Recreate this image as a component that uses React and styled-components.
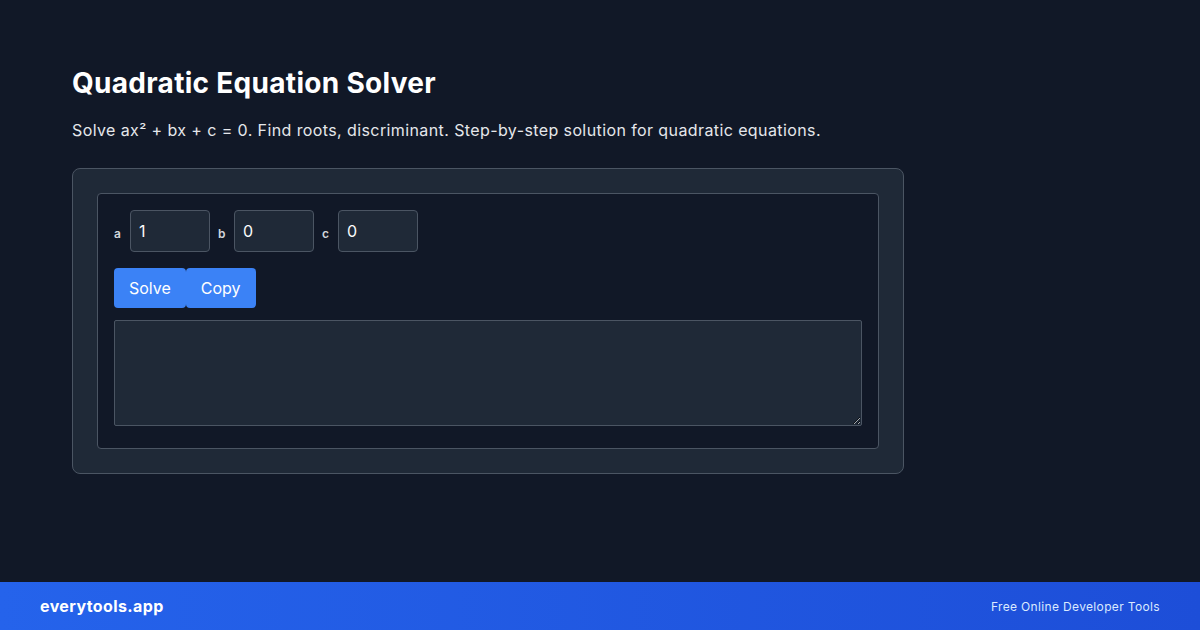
import React, { useState } from "react";
import styled, { createGlobalStyle } from "styled-components";

const GlobalStyle = createGlobalStyle`
	html, body {
		margin: 0;
		padding: 0;
		background: #111827;
	}
	body {
		font-family: Inter, "Noto Sans", "Liberation Sans", sans-serif;
		color: #f9fafb;
	}
	* {
		box-sizing: border-box;
	}
`;

const App = () => {
	const [a, setA] = useState("1");
	const [b, setB] = useState("0");
	const [c, setC] = useState("0");

	return (
		<Page>
			<GlobalStyle />
			<Main>
				<Title>Quadratic Equation Solver</Title>
				<Description>
					Solve ax² + bx + c = 0. Find roots, discriminant. Step-by-step
					solution for quadratic equations.
				</Description>

				<Card>
					<Panel>
						<Inputs>
							<Label>a</Label>
							<Input value={a} onChange={(e) => setA(e.target.value)} />
							<Label>b</Label>
							<Input value={b} onChange={(e) => setB(e.target.value)} />
							<Label>c</Label>
							<Input value={c} onChange={(e) => setC(e.target.value)} />
						</Inputs>
						<Row>
							<Button>Solve</Button>
							<Button>Copy</Button>
						</Row>
						<Output readOnly />
					</Panel>
				</Card>
			</Main>

			<Footer>
				<Brand>everytools.app</Brand>
				<Tagline>Free Online Developer Tools</Tagline>
			</Footer>
		</Page>
	);
};

export default App;

const Page = styled.div`
	min-height: 100vh;
	display: flex;
	flex-direction: column;
`;

const Main = styled.main`
	flex: 1;
	padding: 65px 72px 0;
`;

const Title = styled.h1`
	margin: 0;
	font-size: 28px;
	line-height: 36px;
	font-weight: 700;
	letter-spacing: 0.3px;
	color: #ffffff;
`;

const Description = styled.p`
	margin: 17px 0 26px;
	font-size: 16px;
	line-height: 24px;
	letter-spacing: 0.4px;
	color: #e5e7eb;
`;

const Card = styled.div`
	width: 832px;
	padding: 24px;
	background: #1f2937;
	border: 1px solid #4b5563;
	border-radius: 8px;
`;

const Panel = styled.div`
	padding: 16px 16px 16px;
	background: #111827;
	border: 1px solid #4b5563;
	border-radius: 4px;
`;

const Inputs = styled.div`
	display: flex;
	align-items: center;
	gap: 8px;
`;

const Label = styled.label`
	min-width: 8px;
	font-size: 12px;
	font-weight: 600;
	color: #d1d5db;
	margin-top: 4px;
`;

const Input = styled.input`
	width: 80px;
	height: 42px;
	padding: 0 8px;
	background: #1f2937;
	border: 1px solid #4b5563;
	border-radius: 4px;
	color: #f9fafb;
	font-family: inherit;
	font-size: 16px;
	outline: none;
`;

const Row = styled.div`
	display: flex;
	margin-top: 16px;
`;

const Button = styled.button`
	height: 40px;
	padding: 0 15px;
	background: #3b82f6;
	color: #ffffff;
	border: none;
	border-radius: 4px;
	font-family: inherit;
	font-size: 16px;
	cursor: pointer;
`;

const Output = styled.textarea`
	display: block;
	width: 100%;
	height: 106px;
	margin: 12px 0 6px;
	background: #1f2937;
	border: 1px solid #4b5563;
	border-radius: 2px;
	color: #f9fafb;
	resize: vertical;
	font-family: inherit;
	font-size: 14px;
`;

const Footer = styled.footer`
	height: 48px;
	padding: 0 40px;
	display: flex;
	align-items: center;
	justify-content: space-between;
	background: linear-gradient(90deg, #2563eb, #1d4ed8);
`;

const Brand = styled.span`
	font-size: 16px;
	font-weight: 700;
	letter-spacing: 0.4px;
	color: #ffffff;
`;

const Tagline = styled.span`
	font-size: 12px;
	letter-spacing: 0.35px;
	color: #dbeafe;
`;
